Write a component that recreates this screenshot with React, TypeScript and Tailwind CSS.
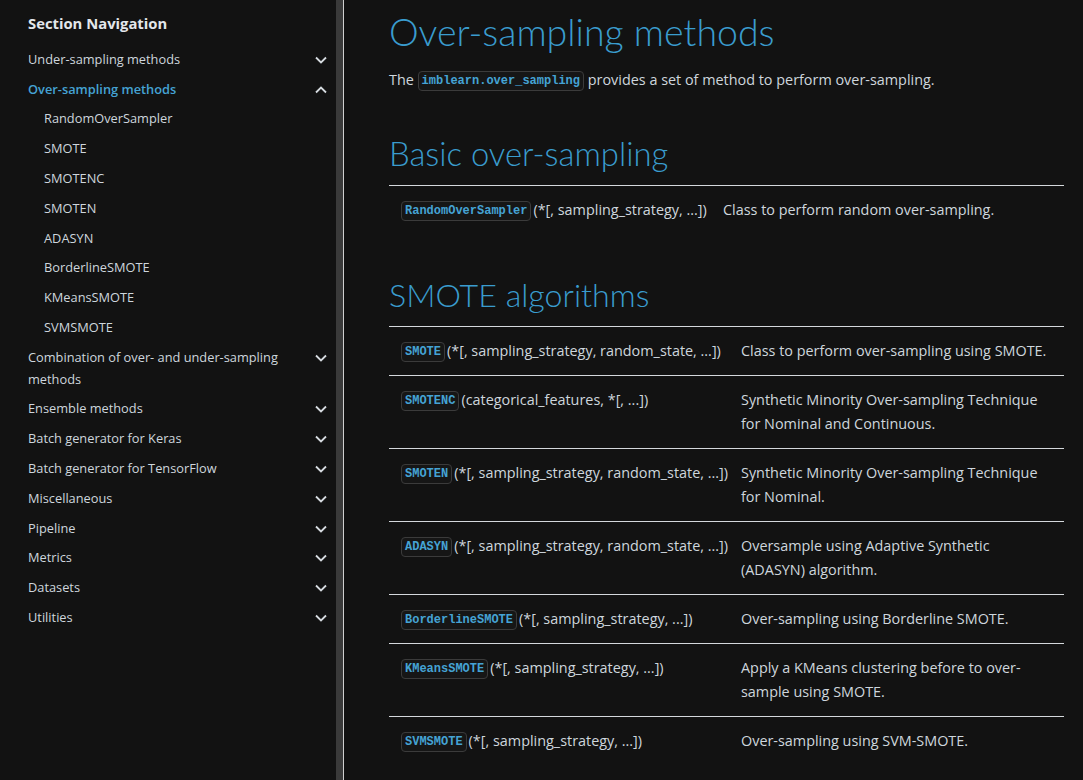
import { ReactNode } from "react";

const navItems = [
  { label: "Under-sampling methods" },
  {
    label: "Over-sampling methods",
    open: true,
    children: [
      "RandomOverSampler",
      "SMOTE",
      "SMOTENC",
      "SMOTEN",
      "ADASYN",
      "BorderlineSMOTE",
      "KMeansSMOTE",
      "SVMSMOTE",
    ],
  },
  { label: "Combination of over- and under-sampling methods" },
  { label: "Ensemble methods" },
  { label: "Batch generator for Keras" },
  { label: "Batch generator for TensorFlow" },
  { label: "Miscellaneous" },
  { label: "Pipeline" },
  { label: "Metrics" },
  { label: "Datasets" },
  { label: "Utilities" },
];

const smoteRows = [
  {
    name: "SMOTE",
    sig: "(*[, sampling_strategy, random_state, ...])",
    desc: "Class to perform over-sampling using SMOTE.",
  },
  {
    name: "SMOTENC",
    sig: "(categorical_features, *[, ...])",
    desc: "Synthetic Minority Over-sampling Technique for Nominal and Continuous.",
  },
  {
    name: "SMOTEN",
    sig: "(*[, sampling_strategy, random_state, ...])",
    desc: "Synthetic Minority Over-sampling Technique for Nominal.",
  },
  {
    name: "ADASYN",
    sig: "(*[, sampling_strategy, random_state, ...])",
    desc: "Oversample using Adaptive Synthetic (ADASYN) algorithm.",
  },
  {
    name: "BorderlineSMOTE",
    sig: "(*[, sampling_strategy, ...])",
    desc: "Over-sampling using Borderline SMOTE.",
  },
  {
    name: "KMeansSMOTE",
    sig: "(*[, sampling_strategy, ...])",
    desc: "Apply a KMeans clustering before to over-sample using SMOTE.",
  },
  {
    name: "SVMSMOTE",
    sig: "(*[, sampling_strategy, ...])",
    desc: "Over-sampling using SVM-SMOTE.",
  },
];

function Chevron({ up }: { up?: boolean }) {
  return (
    <svg width="12" height="8" viewBox="0 0 12 8" className="shrink-0 mt-[8px]">
      <polyline
        points={up ? "1,6.5 6,1.5 11,6.5" : "1,1.5 6,6.5 11,1.5"}
        fill="none"
        stroke="#d6dbe0"
        strokeWidth="1.8"
      />
    </svg>
  );
}

function Code({ children }: { children: ReactNode }) {
  return (
    <code className="inline-block h-[20px] leading-[18px] px-[3px] border border-[#3b3b3b] rounded-[4px] bg-[#161616] text-[#45a3d4] text-[12px] font-bold font-['Liberation_Mono',monospace] align-middle">
      {children}
    </code>
  );
}

function Row({ name, sig, desc, col }: { name: string; sig: string; desc: string; col: string }) {
  return (
    <div className={`grid ${col} border-t border-[#d4d8dc]`}>
      <div className="px-[12px] py-[12px] whitespace-nowrap">
        <Code>{name}</Code>
        <span className="ml-[2px]">{sig}</span>
      </div>
      <div className="px-[12px] py-[12px]">{desc}</div>
    </div>
  );
}

export default function App() {
  return (
    <div className="flex h-[780px] w-[1083px] overflow-hidden bg-[#121212] font-['Open_Sans','Noto_Sans',sans-serif] text-[14.4px] text-[#ced6dd]">
      <aside className="w-[336px] shrink-0 pl-[28px] pr-[9px] pt-[12px] text-[12.8px]">
        <div className="h-[22px] leading-[22px] text-[14.8px] font-bold text-[#e3e7eb]">Section Navigation</div>
        <ul className="mt-[10px]">
          {navItems.map((item) => (
            <li key={item.label}>
              <div className="flex justify-between py-[3.9px] leading-[22px]">
                <span className={item.open ? "text-[#45a3d4] font-semibold" : ""}>{item.label}</span>
                <Chevron up={item.open} />
              </div>
              {item.children && (
                <ul>
                  {item.children.map((c) => (
                    <li key={c} className="pl-[16px] py-[3.9px] leading-[22px]">
                      {c}
                    </li>
                  ))}
                </ul>
              )}
            </li>
          ))}
        </ul>
      </aside>
      <div className="w-[7px] bg-[#3a3a3a] shrink-0" />
      <div className="w-px bg-[#cfcfcf] shrink-0" />
      <main className="flex-1 pl-[45px] pr-[19px] pt-[9px] leading-[24px]">
        <h1 className="h-[46px] leading-[46px] text-[37.5px] font-light font-['Lato',sans-serif] text-[#3a9cce]">
          Over-sampling methods
        </h1>
        <p className="mt-[13px]">
          The <Code>imblearn.over_sampling</Code> provides a set of method to perform over-sampling.
        </p>
        <h2 className="mt-[44px] h-[36px] leading-[36px] text-[32.8px] font-light font-['Lato',sans-serif] text-[#3a9cce]">
          Basic over-sampling
        </h2>
        <div className="mt-[13px]">
          <Row
            col="grid-cols-[322px_1fr]"
            name="RandomOverSampler"
            sig="(*[, sampling_strategy, ...])"
            desc="Class to perform random over-sampling."
          />
        </div>
        <h2 className="mt-[43px] h-[36px] leading-[36px] text-[32.2px] font-light font-['Lato',sans-serif] text-[#3a9cce]">
          SMOTE algorithms
        </h2>
        <div className="mt-[13px]">
          {smoteRows.map((r) => (
            <Row key={r.name} col="grid-cols-[340px_1fr]" {...r} />
          ))}
        </div>
      </main>
    </div>
  );
}
